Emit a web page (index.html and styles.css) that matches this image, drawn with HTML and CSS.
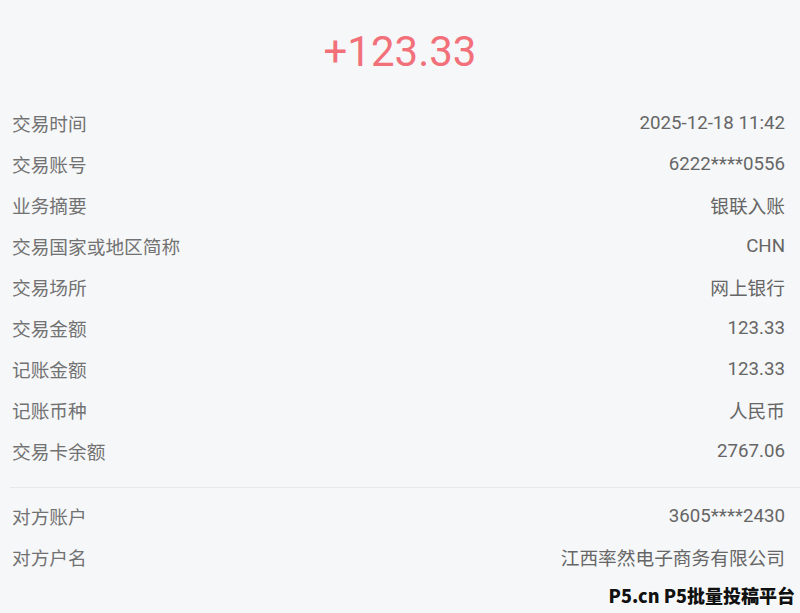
FILE: index.html
```html
<!DOCTYPE html>
<html lang="zh-CN">
<head>
<meta charset="utf-8">
<title>交易详情</title>
<link rel="stylesheet" href="styles.css">
</head>
<body>
<div class="page">
  <div class="amount">+123.33</div>
  <div class="group">
    <div class="row"><span class="label">交易时间</span><span class="value">2025-12-18 11:42</span></div>
    <div class="row"><span class="label">交易账号</span><span class="value">6222****0556</span></div>
    <div class="row"><span class="label">业务摘要</span><span class="value">银联入账</span></div>
    <div class="row"><span class="label">交易国家或地区简称</span><span class="value">CHN</span></div>
    <div class="row"><span class="label">交易场所</span><span class="value">网上银行</span></div>
    <div class="row"><span class="label">交易金额</span><span class="value">123.33</span></div>
    <div class="row"><span class="label">记账金额</span><span class="value">123.33</span></div>
    <div class="row"><span class="label">记账币种</span><span class="value">人民币</span></div>
    <div class="row"><span class="label">交易卡余额</span><span class="value">2767.06</span></div>
  </div>
  <div class="divider"></div>
  <div class="group">
    <div class="row"><span class="label">对方账户</span><span class="value">3605****2430</span></div>
    <div class="row"><span class="label">对方户名</span><span class="value">江西率然电子商务有限公司</span></div>
  </div>
  <div class="watermark">P5.cn P5批量投稿平台</div>
</div>
</body>
</html>
```
FILE: styles.css
```css
html, body {
  margin: 0;
  padding: 0;
  background: #f6f7f9;
}
.page {
  position: relative;
  width: 800px;
  height: 613px;
  overflow: hidden;
  font-family: Roboto, "Noto Sans CJK SC", sans-serif;
  color: #6b6b6b;
}
.amount {
  height: 102px;
  box-sizing: border-box;
  padding-top: 27px;
  text-align: center;
  font-size: 42px;
  line-height: 50px;
  color: #f2707a;
}
.group {
  padding: 0 15px 0 12px;
}
.row {
  height: 41px;
  display: flex;
  align-items: center;
  justify-content: space-between;
  font-size: 18.7px;
}
.label {
  color: #727272;
}
.value {
  color: #666;
}
.divider {
  height: 1px;
  background: #e6e7e9;
  margin: 16px 0 7px 10px;
}
.watermark {
  position: absolute;
  right: 5px;
  bottom: 7px;
  font-family: "Noto Sans CJK SC", sans-serif;
  font-weight: 900;
  font-size: 18px;
  line-height: 22px;
  color: #111;
  text-shadow: 0 0 2px #fff, 0 0 2px #fff;
}
```
